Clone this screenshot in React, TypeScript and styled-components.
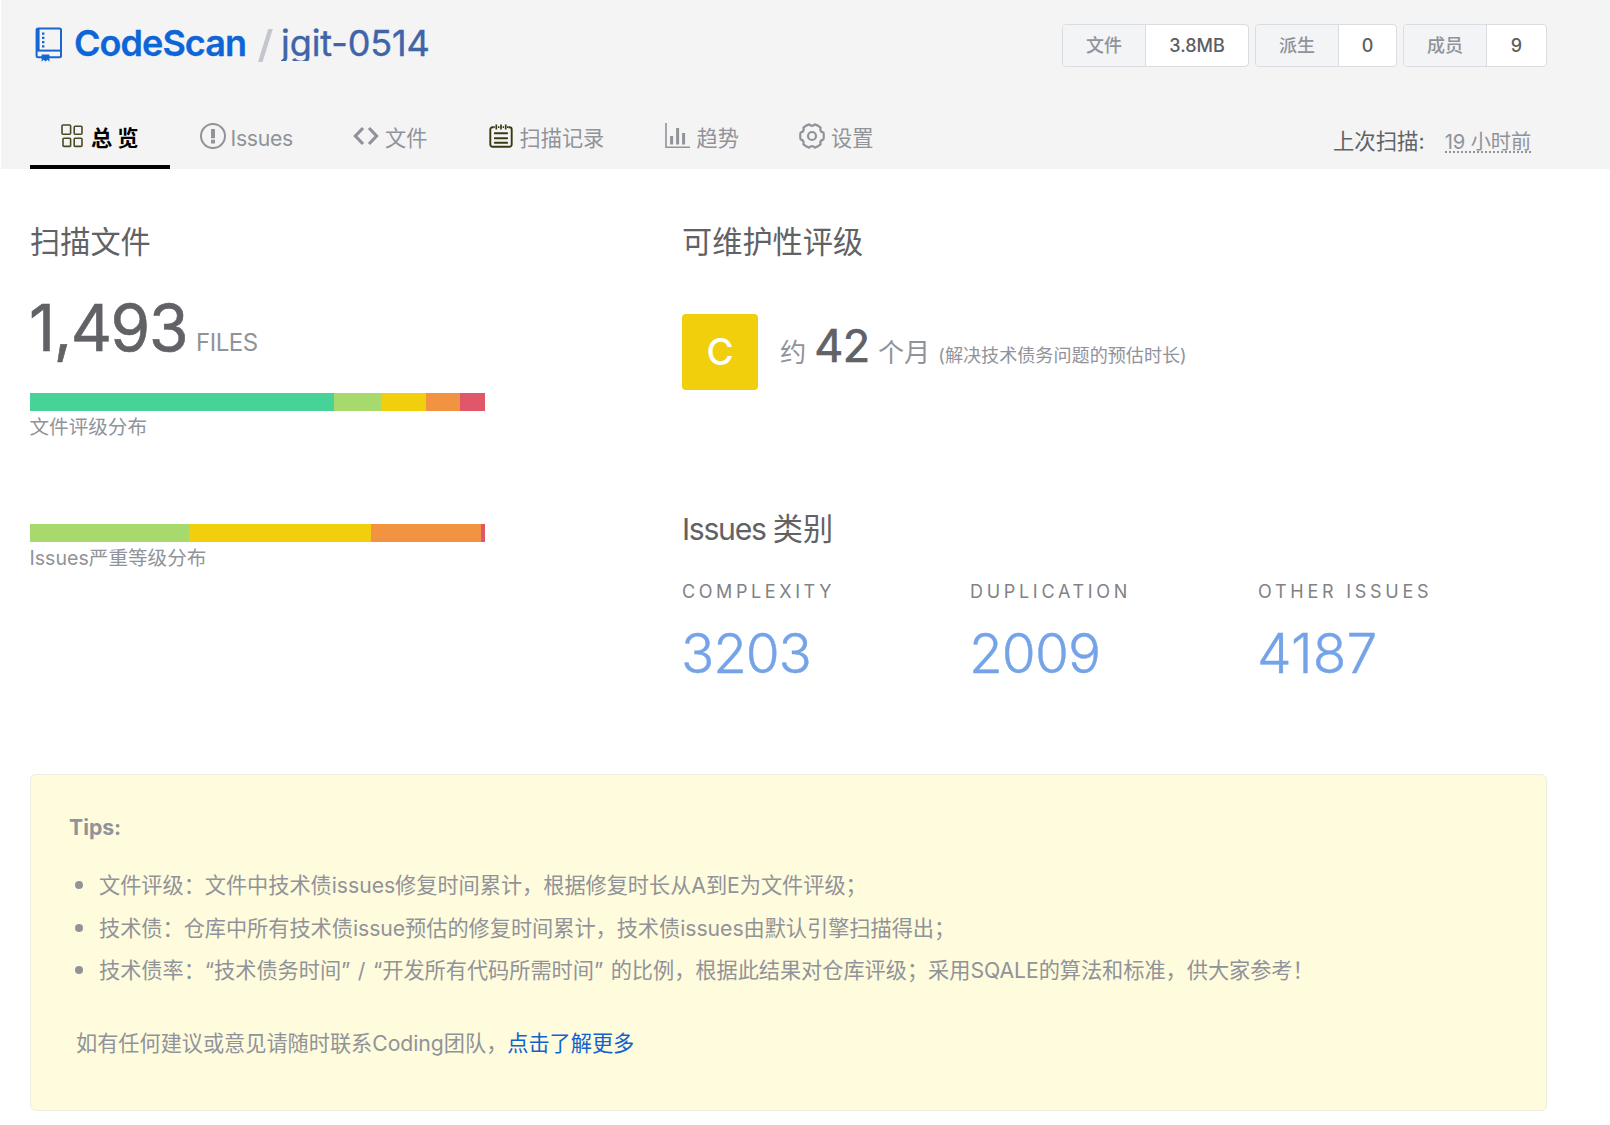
import React from 'react';
import styled, { createGlobalStyle } from 'styled-components';

const Global = createGlobalStyle`
  * { box-sizing: border-box; }
  body {
    margin: 0;
    background: #fff;
    font-family: Inter, "Noto Sans CJK SC", sans-serif;
    color: #606266;
    white-space: nowrap;
  }
  svg { display: block; flex: none; }
`;

const Page = styled.div`
  width: 1610px;
  height: 1125px;
  overflow: hidden;
`;

const Header = styled.header`
  height: 169px;
  margin-left: 1px;
  padding: 0 63px 0 29px;
  background: #f4f4f4;
`;

const TopRow = styled.div`
  display: flex;
  justify-content: space-between;
  align-items: flex-start;
  height: 87px;
`;

const RepoTitle = styled.h1`
  display: flex;
  align-items: center;
  margin: 25px 0 0 5px;
  height: 37px;
  font-size: 36px;
  line-height: 37px;
  font-weight: 400;
`;

const Owner = styled.a`
  margin-left: 11px;
  font-weight: 600;
  letter-spacing: -0.95px;
  color: #0c66d8;
  -webkit-text-stroke: 0.3px #0c66d8;
`;

const Slash = styled.svg`
  margin: 4px 0 0 12px;
`;

const Repo = styled.a`
  margin-left: 8px;
  height: 36px;
  margin-bottom: 1px;
  overflow: hidden;
  letter-spacing: -0.1px;
  color: #4064a8;
  -webkit-text-stroke: 0.4px #4064a8;
`;

const Stats = styled.div`
  display: flex;
  gap: 6px;
  margin-top: 24px;
`;

const Stat = styled.div<{ $width: number }>`
  display: flex;
  width: ${(p) => p.$width}px;
  height: 43px;
  border: 1px solid #d9dce1;
  border-radius: 4px;
  background: #fff;
  overflow: hidden;
  font-size: 18px;
  line-height: 41px;
  font-weight: 500;
  text-align: center;
`;

const StatLabel = styled.span`
  width: 83px;
  border-right: 1px solid #d9dce1;
  background: #f3f4f6;
  color: #909399;
`;

const StatValue = styled.span`
  flex: 1;
  color: #5c5e62;
`;

const NavRow = styled.nav`
  display: flex;
  height: 82px;
`;

const Tab = styled.a<{ $active?: boolean; $width: number }>`
  display: flex;
  align-items: center;
  width: ${(p) => p.$width}px;
  padding: 24px 0 0 ${(p) => (p.$active ? 31 : 30)}px;
  border-bottom: 4px solid ${(p) => (p.$active ? '#000' : 'transparent')};
  color: ${(p) => (p.$active ? '#000' : '#909399')};
  font-size: 21.2px;
  line-height: 24px;
  font-weight: ${(p) => (p.$active ? 700 : 400)};
`;

const TabIcon = styled.svg`
  margin-bottom: 4px;
`;

const TabText = styled.span<{ $gap: number; $spacing?: number }>`
  margin-left: ${(p) => p.$gap}px;
  letter-spacing: ${(p) => p.$spacing ?? 0}px;
`;

const LastScan = styled.div`
  display: flex;
  align-items: center;
  margin: 40px 16px 0 auto;
  height: 24px;
  font-size: 21.4px;
`;

const ScanTime = styled.span`
  margin: 6px 0 0 20px;
  padding-top: 2px;
  font-size: 20.2px;
  line-height: 18px;
  letter-spacing: -0.1px;
  color: #909399;
  border-bottom: 2px dotted #909399;
`;

const Overview = styled.main`
  display: grid;
  grid-template-columns: 652px 1fr;
  height: 605px;
  padding: 0 0 0 30px;
`;

const Column = styled.section`
  display: flex;
  flex-direction: column;
`;

const SectionTitle = styled.h2<{ $top: number }>`
  margin: ${(p) => p.$top}px 0 0;
  font-size: 30.2px;
  line-height: 40px;
  font-weight: 400;
`;

const Latin = styled.span`
  letter-spacing: -1.3px;
`;

const FileCount = styled.div`
  display: flex;
  align-items: baseline;
  height: 64px;
  margin-top: 34px;
  line-height: 64px;
`;

const BigNumber = styled.span`
  margin-left: -1px;
  font-size: 64px;
  letter-spacing: -1.4px;
  -webkit-text-stroke: 0.6px #606266;
`;

const Unit = styled.span`
  margin-left: 9px;
  font-size: 24px;
  letter-spacing: -0.5px;
  color: #909399;
`;

const Bar = styled.div<{ $top: number }>`
  display: flex;
  width: 455px;
  height: 18px;
  margin-top: ${(p) => p.$top}px;
`;

const Segment = styled.div<{ $color: string }>`
  background: ${(p) => p.$color};
`;

const Caption = styled.div`
  margin: 4px 0 1px -0.5px;
  font-size: 19.6px;
  line-height: 24px;
  color: #909399;
`;

const Rating = styled.div`
  display: flex;
  height: 76px;
  margin-top: 52px;
`;

const Grade = styled.div`
  width: 76px;
  height: 76px;
  margin-right: 22px;
  border-radius: 4px;
  background: #f1cf0c;
  color: #fff;
  font-size: 37px;
  font-weight: 500;
  line-height: 75px;
  text-align: center;
`;

const Debt = styled.div`
  display: flex;
  align-items: baseline;
  height: 64px;
  line-height: 63px;
  font-size: 26.2px;
  color: #909399;
`;

const Months = styled.span`
  margin: 0 8px 0 8px;
  font-size: 45px;
  letter-spacing: -0.4px;
  color: #606266;
  -webkit-text-stroke: 0.7px #606266;
`;

const Note = styled.span`
  margin-left: 8px;
  font-size: 18.1px;
`;

const Categories = styled.div`
  display: grid;
  grid-template-columns: 288px 288px 1fr;
  margin-top: 32px;
`;

const CategoryName = styled.div<{ $spacing: number }>`
  font-size: 18px;
  line-height: 22px;
  letter-spacing: ${(p) => p.$spacing}px;
  color: #808285;
`;

const CategoryValue = styled.div<{ $spacing: number }>`
  margin: 19px 0 0 -1px;
  font-size: 55px;
  line-height: 62px;
  font-weight: 300;
  letter-spacing: ${(p) => p.$spacing}px;
  color: #74a3e8;
  -webkit-text-stroke: 0.4px #74a3e8;
`;

const Tips = styled.aside`
  width: 1517px;
  height: 337px;
  margin-left: 30px;
  padding: 37px 38px 0;
  border: 1px solid #efeee2;
  border-radius: 6px;
  background: #fffbdd;
  color: #909399;
  font-size: 21.2px;
  line-height: 30px;
`;

const TipsTitle = styled.strong`
  display: block;
  font-weight: 700;
`;

const TipsList = styled.ul`
  margin: 22px 0 0;
  padding: 0 0 0 6px;
  list-style: none;
`;

const Tip = styled.li`
  display: flex;
  align-items: center;
  height: 42.5px;
  letter-spacing: -0.03px;
  word-spacing: 1.6px;
  &::before {
    content: '';
    width: 8px;
    height: 8px;
    margin-right: 16px;
    border-radius: 50%;
    background: #909399;
  }
`;

const Contact = styled.p`
  margin: 36px 0 0 7px;
  letter-spacing: -0.03px;
`;

const Link = styled.a`
  color: #0f62cf;
`;

const Logo = styled.svg`
  margin-top: 1px;
`;

const RepoIcon = () => (
  <Logo width="28" height="35" viewBox="0 0 28 35" fill="none" stroke="#1766d2" strokeWidth="2">
    <rect x="1.6" y="1.6" width="24.4" height="28.6" rx="1.5" />
    <path d="M3 2v21.5" strokeWidth="3.2" />
    <path d="M1.6 23.6H26" />
    <path d="M8.2 5.6v2.2M8.2 9.8v2.2M8.2 14v2.2M8.2 18.2v2.2" strokeWidth="2.4" />
    <path d="M6.6 27.4h7.8v7.4l-2-2-1.9 1.6-1.9-1.6-2 2z" fill="#1766d2" stroke="none" />
  </Logo>
);

const GridIcon = () => (
  <TabIcon width="22" height="24" viewBox="0 0 22 24" fill="none" stroke="#4a4928" strokeWidth="1.6">
    <rect x="1" y="1" width="8.6" height="9.2" rx="1" />
    <rect x="13.2" y="2.2" width="7.8" height="8" rx="1" />
    <rect x="2" y="14.2" width="7.6" height="8.2" rx="1" />
    <rect x="13.2" y="14.2" width="7.8" height="8.2" rx="1" />
  </TabIcon>
);

const IssueIcon = () => (
  <TabIcon width="26" height="26" viewBox="0 0 26 26" fill="none" stroke="#909399">
    <circle cx="13" cy="13" r="12" strokeWidth="2" />
    <path d="M13 6v9.2M13 16.8v3.6" strokeWidth="4" />
  </TabIcon>
);

const CodeIcon = () => (
  <TabIcon width="26" height="20" viewBox="0 0 26 20" fill="none" stroke="#909399" strokeWidth="3.2">
    <path d="M10 2L2.4 10l7.6 8M16 2l7.6 8-7.6 8" />
  </TabIcon>
);

const NotesIcon = () => (
  <TabIcon width="24" height="24" viewBox="0 0 24 24" fill="none" stroke="#3a3913" strokeWidth="1.9">
    <path d="M4.5 3.2H3.6a2.3 2.3 0 0 0-2.3 2.3v15a2.3 2.3 0 0 0 2.3 2.3h16.8a2.3 2.3 0 0 0 2.3-2.3v-15a2.3 2.3 0 0 0-2.3-2.3h-.9" />
    <path d="M7.3 0.5v5M12 0.5v5M16.7 0.5v5M9 3.2h1.4M13.6 3.2H15M4.4 3.2h1.4M18 3.2h1.4" strokeWidth="1.7" />
    <path d="M5.8 9.3h12.4M5.8 14.2h12.4M5.8 18.8h12.4" strokeLinecap="round" />
  </TabIcon>
);

const ChartIcon = () => (
  <TabIcon width="25" height="26" viewBox="0 0 25 26" fill="none" stroke="#909399">
    <path d="M1 0v24.2h24" strokeWidth="1.6" />
    <path d="M6.6 13v8.6M12.6 5v16.6M18.6 10v11.6" strokeWidth="3" />
  </TabIcon>
);

const GearIcon = () => (
  <TabIcon width="26" height="26" viewBox="0 0 26 26" fill="none" stroke="#909399" strokeWidth="2.2" strokeLinejoin="round">
    <path d="M16 1.4Q19.4 2.4 21.6 4.8Q20.6 8.6 24.4 9.6Q25.2 13 24.4 16.4Q20.6 17.4 21.6 21.2Q19.4 23.6 16 24.6Q13 21.8 10 24.6Q6.6 23.6 4.4 21.2Q5.4 17.4 1.6 16.4Q.8 13 1.6 9.6Q5.4 8.6 4.4 4.8Q6.6 2.4 10 1.4Q13 4.2 16 1.4Z" />
    <circle cx="13" cy="13" r="4" />
  </TabIcon>
);

const tabs = [
  { label: '总 览', icon: <GridIcon />, gap: 8, width: 140, active: true },
  { label: 'Issues', icon: <IssueIcon />, gap: 4.5, width: 153, spacing: -0.3 },
  { label: '文件', icon: <CodeIcon />, gap: 6, width: 136 },
  { label: '扫描记录', icon: <NotesIcon />, gap: 6.5, width: 176 },
  { label: '趋势', icon: <ChartIcon />, gap: 6.5, width: 134 },
  { label: '设置', icon: <GearIcon />, gap: 6, width: 134 },
];

const stats = [
  { label: '文件', value: '3.8MB', width: 187 },
  { label: '派生', value: '0', width: 142 },
  { label: '成员', value: '9', width: 144 },
];

const fileGrades = [
  { color: '#47d398', size: 303.5 },
  { color: '#a7d96d', size: 47.5 },
  { color: '#f1cf0c', size: 44.5 },
  { color: '#f19341', size: 34 },
  { color: '#df5768', size: 25.5 },
];

const issueLevels = [
  { color: '#a7d96d', size: 158.5 },
  { color: '#f1cf0c', size: 182.5 },
  { color: '#f19341', size: 109.5 },
  { color: '#df5768', size: 4.5 },
];

const categories = [
  { name: 'COMPLEXITY', value: '3203', nameSpacing: 3.6, valueSpacing: -1.2 },
  { name: 'DUPLICATION', value: '2009', nameSpacing: 3.7, valueSpacing: -0.9 },
  { name: 'OTHER ISSUES', value: '4187', nameSpacing: 3.75, valueSpacing: 0.2 },
];

const tips = [
  '文件评级：文件中技术债issues修复时间累计，根据修复时长从A到E为文件评级；',
  '技术债：仓库中所有技术债issue预估的修复时间累计，技术债issues由默认引擎扫描得出；',
  '技术债率：“技术债务时间” / “开发所有代码所需时间” 的比例，根据此结果对仓库评级；采用SQALE的算法和标准，供大家参考！',
];

type Part = { color: string; size: number };

const Distribution = ({ parts, top }: { parts: Part[]; top: number }) => (
  <Bar $top={top}>
    {parts.map((p) => (
      <Segment key={p.color} $color={p.color} style={{ flexGrow: p.size }} />
    ))}
  </Bar>
);

export default function App() {
  return (
    <Page>
      <Global />
      <Header>
        <TopRow>
          <RepoTitle>
            <RepoIcon />
            <Owner>CodeScan</Owner>
            <Slash width="15" height="33" viewBox="0 0 15 33">
              <path d="M10.2 0h4.6L4.6 33H0z" fill="#c3c6cc" />
            </Slash>
            <Repo>jgit-0514</Repo>
          </RepoTitle>
          <Stats>
            {stats.map((s) => (
              <Stat key={s.label} $width={s.width}>
                <StatLabel>{s.label}</StatLabel>
                <StatValue>{s.value}</StatValue>
              </Stat>
            ))}
          </Stats>
        </TopRow>
        <NavRow>
          {tabs.map((t) => (
            <Tab key={t.label} $active={t.active} $width={t.width}>
              {t.icon}
              <TabText $gap={t.gap} $spacing={t.spacing}>{t.label}</TabText>
            </Tab>
          ))}
          <LastScan>
            上次扫描:
            <ScanTime>19 小时前</ScanTime>
          </LastScan>
        </NavRow>
      </Header>
      <Overview>
        <Column>
          <SectionTitle $top={53}>扫描文件</SectionTitle>
          <FileCount>
            <BigNumber>1,493</BigNumber>
            <Unit>FILES</Unit>
          </FileCount>
          <Distribution parts={fileGrades} top={33} />
          <Caption>文件评级分布</Caption>
          <Distribution parts={issueLevels} top={84} />
          <Caption>Issues严重等级分布</Caption>
        </Column>
        <Column>
          <SectionTitle $top={53}>可维护性评级</SectionTitle>
          <Rating>
            <Grade>C</Grade>
            <Debt>
              约<Months>42</Months>个月<Note>(解决技术债务问题的预估时长)</Note>
            </Debt>
          </Rating>
          <SectionTitle $top={119}>
            <Latin>Issues </Latin>类别
          </SectionTitle>
          <Categories>
            {categories.map((c) => (
              <div key={c.name}>
                <CategoryName $spacing={c.nameSpacing}>{c.name}</CategoryName>
                <CategoryValue $spacing={c.valueSpacing}>{c.value}</CategoryValue>
              </div>
            ))}
          </Categories>
        </Column>
      </Overview>
      <Tips>
        <TipsTitle>Tips:</TipsTitle>
        <TipsList>
          {tips.map((t) => (
            <Tip key={t}>{t}</Tip>
          ))}
        </TipsList>
        <Contact>
          如有任何建议或意见请随时联系Coding团队，<Link>点击了解更多</Link>
        </Contact>
      </Tips>
    </Page>
  );
}
